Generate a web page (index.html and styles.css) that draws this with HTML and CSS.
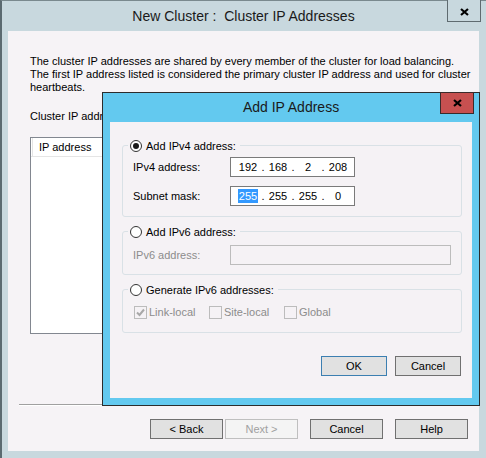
FILE: index.html
```html
<!DOCTYPE html>
<html lang="en">
<head>
  <meta charset="UTF-8">
  <title>New Cluster : Cluster IP Addresses</title>
  <link rel="stylesheet" href="styles.css">
</head>
<body>
  <div class="window">
    <div class="titlebar">
      <span class="title">New Cluster :&nbsp; Cluster IP Addresses</span>
      <button class="win-close" type="button">
        <svg width="9" height="8" viewBox="0 0 9 8"><path d="M1 1 L8 7 M8 1 L1 7" stroke="#000" stroke-width="2.2" fill="none"/></svg>
      </button>
    </div>
    <div class="content">
      <p class="intro">The cluster IP addresses are shared by every member of the cluster for load balancing.<br>The first IP address listed is considered the primary cluster IP address and used for cluster<br>heartbeats.</p>
      <div class="list-label">Cluster IP addresses:</div>
      <div class="listbox">
        <div class="list-head"><span class="col">IP address</span></div>
      </div>
      <div class="sep"></div>
      <div class="nav">
        <button class="btn" type="button">&lt; Back</button>
        <button class="btn disabled" type="button">Next &gt;</button>
        <button class="btn gap" type="button">Cancel</button>
        <button class="btn gap" type="button">Help</button>
      </div>
    </div>
  </div>

  <div class="dialog">
    <div class="dlg-titlebar">
      <span class="dlg-title">Add IP Address</span>
      <button class="dlg-close" type="button">
        <svg width="9" height="8" viewBox="0 0 9 8"><path d="M1 1 L8 7 M8 1 L1 7" stroke="#000" stroke-width="2.2" fill="none"/></svg>
      </button>
    </div>
    <div class="client">
      <div class="group g1">
        <div class="legend"><span class="radio checked"></span>Add IPv4 address:</div>
        <div class="row">
          <span class="lbl">IPv4 address:</span>
          <div class="ipbox">
            <span class="seg">192</span><span class="dot">.</span><span class="seg">168</span><span class="dot">.</span><span class="seg">2</span><span class="dot">.</span><span class="seg">208</span>
          </div>
        </div>
        <div class="row r2">
          <span class="lbl">Subnet mask:</span>
          <div class="ipbox">
            <span class="seg"><span class="sel">255</span></span><span class="dot">.</span><span class="seg">255</span><span class="dot">.</span><span class="seg">255</span><span class="dot">.</span><span class="seg">0</span>
          </div>
        </div>
      </div>

      <div class="group g2">
        <div class="legend"><span class="radio"></span>Add IPv6 address:</div>
        <div class="row">
          <span class="lbl off">IPv6 address:</span>
          <div class="textbox off"></div>
        </div>
      </div>

      <div class="group g3">
        <div class="legend"><span class="radio"></span>Generate IPv6 addresses:</div>
        <div class="checks">
          <span class="check"><span class="box">
            <svg width="11" height="11" viewBox="0 0 11 11"><path d="M2 5.5 L4.5 8 L9 2.5" stroke="#a8a8a8" stroke-width="2" fill="none"/></svg>
          </span>Link-local</span>
          <span class="check"><span class="box"></span>Site-local</span>
          <span class="check"><span class="box"></span>Global</span>
        </div>
      </div>

      <div class="dlg-buttons">
        <button class="btn small default" type="button">OK</button>
        <button class="btn small" type="button">Cancel</button>
      </div>
    </div>
  </div>
</body>
</html>
```

FILE: styles.css
```css
body {
    margin: 0;
    font-family: "Liberation Sans", Arial, sans-serif;
    font-size: 11px;
    color: #000;
    background: #c8d8de;
}
button {
    font-family: inherit;
    font-size: 11px;
    color: #000;
}

/* wizard window */
.window {
    box-sizing: border-box;
    height: 458px;
    border-left: 2px solid #5b6a70;
    border-top: 1px solid #7a898e;
    background: #c8d8de;
    padding: 0 7px 7px 6px;
}
.titlebar {
    height: 30px;
    display: grid;
    grid-template-columns: 1fr auto 1fr;
    align-items: start;
}
.title {
    grid-column: 2;
    line-height: 30px;
    font-size: 14px;
    color: #1a1a1a;
    white-space: nowrap;
}
.win-close {
    grid-column: 3;
    justify-self: end;
    width: 34px;
    height: 23px;
    margin: -2px -2px 0 0;
    padding: 0;
    border: 1px solid #5f6b70;
    background: #c8d8de;
    display: flex;
    align-items: center;
    justify-content: center;
    padding-top: 2px;
}
.content {
    height: 420px;
    box-sizing: border-box;
    background: #f6f3f6;
    padding: 24px 11px 0 11px;
}
.intro {
    margin: 0;
    padding-left: 11px;
    line-height: 13px;
    white-space: nowrap;
}
.list-label {
    margin-top: 16px;
    padding-left: 11px;
    line-height: 13px;
}
.listbox {
    box-sizing: border-box;
    margin: 14px 0 0 11px;
    width: 340px;
    height: 197px;
    border: 1px solid #828790;
    background: #fff;
}
.list-head {
    height: 18px;
    border-bottom: 1px solid #e5e5e5;
    padding-left: 1px;
}
.list-head .col {
    display: inline-block;
    box-sizing: border-box;
    width: 110px;
    height: 18px;
    line-height: 18px;
    padding-left: 6px;
    border-left: 1px solid #e5e5e5;
    border-right: 1px solid #e5e5e5;
}
.sep {
    margin-top: 70px;
    height: 1px;
    border-top: 1px solid #a0a0a0;
    background: #fff;
}
.nav {
    margin-top: 13px;
    display: flex;
    justify-content: flex-end;
    gap: 2px;
}
.nav .gap {
    margin-left: 10px;
}
.btn {
    box-sizing: border-box;
    width: 73px;
    height: 20px;
    padding: 0;
    border: 1px solid #707070;
    background: #e1e1e1;
}
.btn.disabled {
    border-color: #bfbfbf;
    background: #f4f4f4;
    color: #a0a0a0;
}

/* Add IP Address dialog, floating over the wizard */
.dialog {
    position: absolute;
    left: 102px;
    top: 92px;
    box-sizing: border-box;
    width: 378px;
    height: 314px;
    border: 1px solid #2c2c2c;
    background: #63c9ef;
    padding: 0 7px 7px 7px;
}
.dlg-titlebar {
    height: 29px;
    display: grid;
    grid-template-columns: 1fr auto 1fr;
    align-items: start;
}
.dlg-title {
    grid-column: 2;
    line-height: 29px;
    font-size: 14px;
    color: #1a1a1a;
    white-space: nowrap;
}
.dlg-close {
    grid-column: 3;
    justify-self: end;
    box-sizing: border-box;
    width: 34px;
    height: 22px;
    margin: -1px -2px 0 0;
    padding: 0;
    border: 1px solid #3a2b2b;
    background: #c75050;
    display: flex;
    align-items: center;
    justify-content: center;
}
.client {
    height: 276px;
    box-sizing: border-box;
    background: #f5f2f5;
    padding: 23px 10px 0 12px;
}
.group {
    border: 1px solid #d9e1e6;
    border-radius: 3px;
    padding: 0 10px;
}
.g1 { padding-bottom: 10px; }
.g2 { margin-top: 14px; padding-bottom: 9px; }
.g3 { margin-top: 14px; padding-bottom: 12px; }
.legend {
    display: flex;
    align-items: center;
    gap: 4px;
    width: max-content;
    height: 16px;
    margin: -8px 0 0 -5px;
    padding: 0 4px 0 2px;
    background: #f5f2f5;
}
.radio {
    box-sizing: border-box;
    width: 12px;
    height: 12px;
    border: 1px solid #333;
    border-radius: 50%;
    background: #fff;
    display: flex;
    align-items: center;
    justify-content: center;
}
.radio.checked::after {
    content: "";
    width: 6px;
    height: 6px;
    border-radius: 50%;
    background: #1a1a1a;
}
.row {
    display: flex;
    align-items: center;
    margin-top: 3px;
    height: 20px;
}
.row.r2 { margin-top: 9px; }
.g2 .row { margin-top: 5px; }
.lbl {
    width: 97px;
    flex: none;
}
.off { color: #8c8c8c; }
.ipbox {
    box-sizing: border-box;
    width: 125px;
    height: 20px;
    border: 1px solid #7a7a7a;
    background: #fff;
    display: flex;
    align-items: center;
    padding-left: 6px;
}
.seg {
    width: 22px;
    text-align: center;
}
.dot {
    width: 8px;
    text-align: center;
}
.sel {
    background: #3399ff;
    color: #fff;
    padding: 1px 1px;
}
.textbox {
    box-sizing: border-box;
    width: 221px;
    height: 20px;
    border: 1px solid #bcbcbc;
    background: #f5f2f5;
}
.checks {
    display: flex;
    margin-top: 6px;
    height: 16px;
    align-items: center;
    padding-left: 1px;
    color: #8c8c8c;
}
.check {
    width: 75px;
    display: flex;
    align-items: center;
    gap: 2px;
}
.box {
    box-sizing: border-box;
    width: 13px;
    height: 13px;
    border: 1px solid #bcbcbc;
    background: #f5f2f5;
    display: flex;
    align-items: center;
    justify-content: center;
}
.dlg-buttons {
    margin-top: 23px;
    display: flex;
    justify-content: flex-end;
    gap: 8px;
    padding-right: 1px;
}
.btn.small {
    width: 66px;
}
.btn.default {
    border-color: #3c7fb1;
}
```
